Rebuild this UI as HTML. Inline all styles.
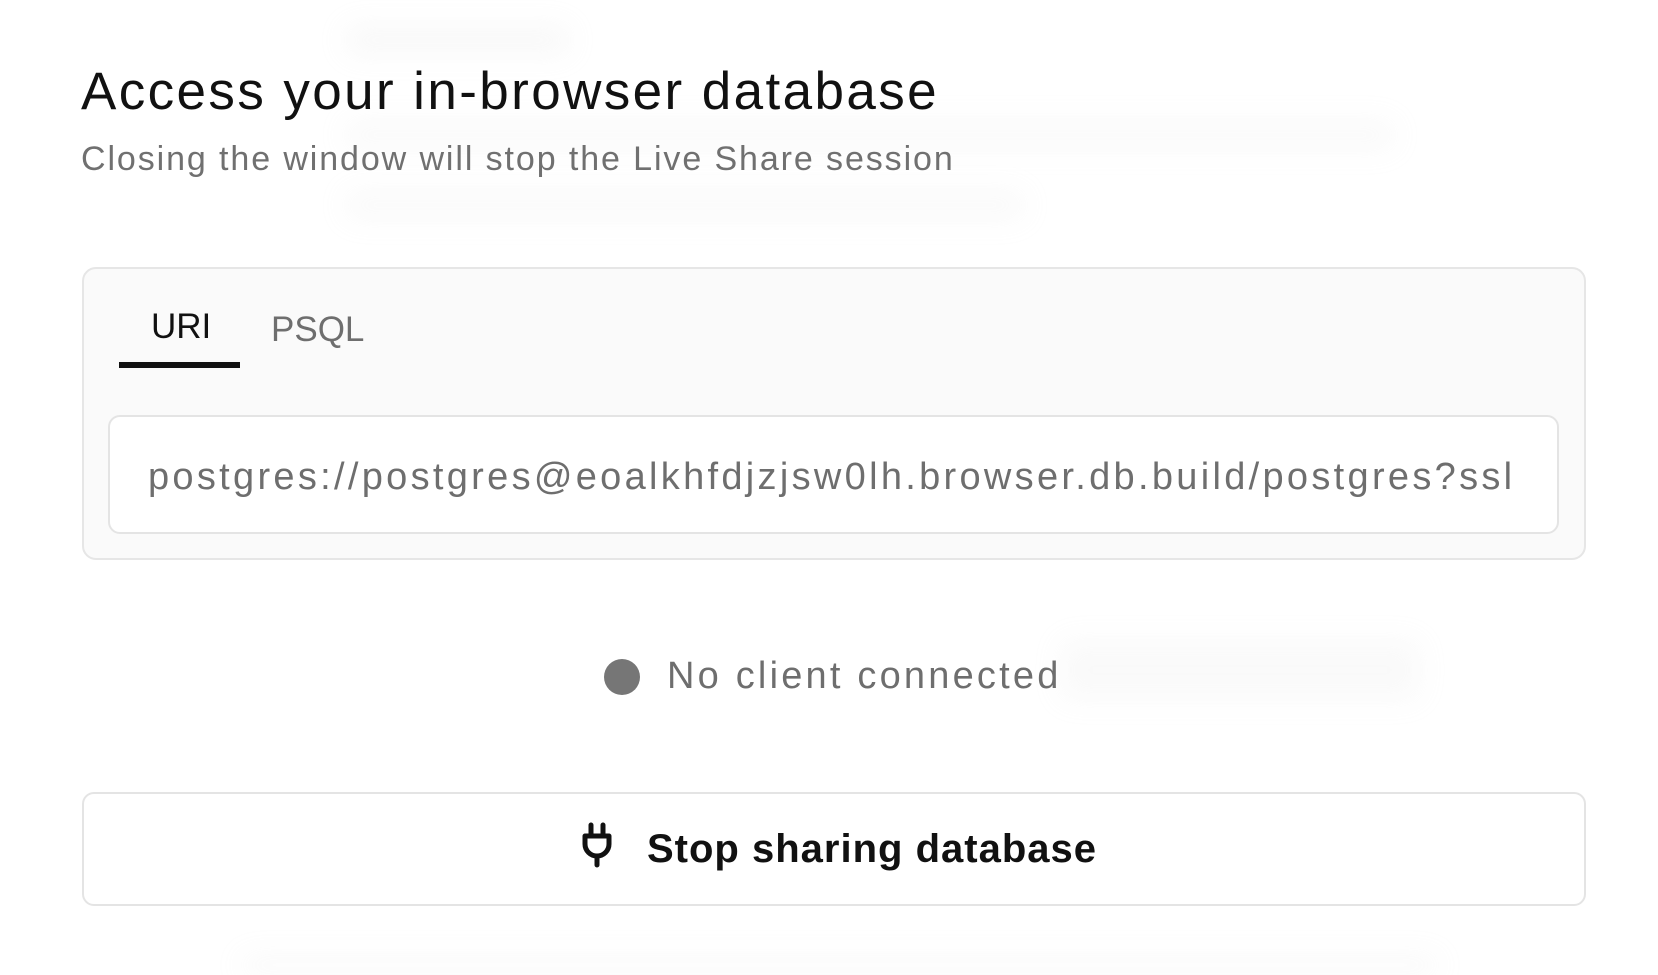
<!DOCTYPE html>
<html><head><meta charset="utf-8">
<style>
html,body{margin:0;padding:0;background:#fff;}
body{width:1658px;height:974px;position:relative;overflow:hidden;font-family:"Liberation Sans",sans-serif;}
.blur{position:absolute;background:#d4d4d4;filter:blur(14px);opacity:.15;border-radius:10px;}
.abs{position:absolute;white-space:nowrap;}
</style></head><body>
<div class="blur" style="left:345px;top:25px;width:225px;height:30px;"></div>
<div class="blur" style="left:345px;top:120px;width:1050px;height:30px;opacity:.12"></div>
<div class="blur" style="left:345px;top:190px;width:680px;height:30px;opacity:.12"></div>
<div class="blur" style="left:345px;top:290px;width:680px;height:30px;opacity:.08"></div>
<div class="blur" style="left:1060px;top:640px;width:360px;height:60px;opacity:.12"></div>
<div class="blur" style="left:240px;top:955px;width:1200px;height:20px;opacity:.12"></div>

<div class="abs" style="left:81px;top:60px;font-size:53px;color:#111;line-height:64px;letter-spacing:2.4px;">Access your in-browser database</div>
<div class="abs" style="left:81px;top:138px;font-size:34px;color:#707070;line-height:42px;letter-spacing:1.9px;">Closing the window will stop the Live Share session</div>

<div class="abs" style="left:82px;top:267px;width:1504px;height:293px;border:2px solid #e6e6e6;border-radius:14px;background:#fafafa;box-sizing:border-box;"></div>
<div class="abs" style="left:151px;top:307px;font-size:35px;color:#111;line-height:40px;">URI</div>
<div class="abs" style="left:271px;top:310px;font-size:35px;color:#6e6e6e;line-height:40px;">PSQL</div>
<div class="abs" style="left:119px;top:362px;width:121px;height:6px;background:#111;"></div>

<div class="abs" style="left:108px;top:415px;width:1451px;height:119px;border:2px solid #e4e4e4;border-radius:12px;background:#fff;box-sizing:border-box;overflow:hidden;">
<div class="abs" style="left:38px;top:38px;font-size:38px;color:#6e6e6e;line-height:44px;letter-spacing:3.3px;">postgres://postgres@eoalkhfdjzjsw0lh.browser.db.build/postgres?ssl</div>
</div>

<div class="abs" style="left:604px;top:659px;width:36px;height:36px;border-radius:50%;background:#767676;"></div>
<div class="abs" style="left:667px;top:654px;font-size:38px;color:#6e6e6e;line-height:44px;letter-spacing:3.2px;">No client connected</div>

<div class="abs" style="left:82px;top:792px;width:1504px;height:114px;border:2px solid #e4e4e4;border-radius:12px;background:#fff;box-sizing:border-box;"></div>
<svg class="abs" style="left:582px;top:822px" width="30" height="46" viewBox="0 0 30 46" fill="none" stroke="#111" stroke-width="5" stroke-linecap="round" stroke-linejoin="round">
<path d="M9 3v11M21 3v11M3 14h24v8a12 12 0 0 1-24 0z M15 34v9"/>
</svg>
<div class="abs" style="left:647px;top:826px;font-size:40px;font-weight:bold;color:#111;line-height:46px;letter-spacing:1px;">Stop sharing database</div>
</body></html>
